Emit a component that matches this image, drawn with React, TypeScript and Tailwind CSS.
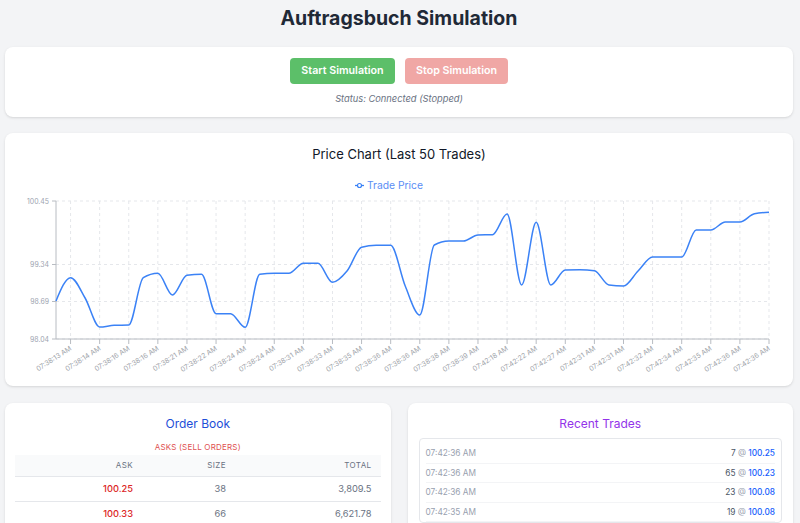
import React from "react";

const X0 = 56;
const X1 = 769;
const YTOP = 201;
const YBOT = 339;

// pixel y of each of the last 50 trades (read off the chart area)
const tradeY = [
  301, 277.7, 298, 327, 325.3, 325, 277.7, 273.3, 295, 275.3,
  274.3, 313.7, 313.7, 327.3, 274.3, 273.3, 273.3, 263.3, 263.3, 282.3,
  271, 247.3, 245.3, 245.3, 286, 315, 245, 241, 241, 235,
  234.7, 214, 285, 222.3, 285, 270, 269.7, 270.7, 285, 286,
  271, 257, 257, 257, 230, 230, 222, 222, 213.7, 212.3,
];

const tickLabels = [
  "07:38:13 AM", "07:38:14 AM", "07:38:16 AM", "07:38:16 AM", "07:38:21 AM",
  "07:38:22 AM", "07:38:24 AM", "07:38:24 AM", "07:38:31 AM", "07:38:33 AM",
  "07:38:35 AM", "07:38:36 AM", "07:38:36 AM", "07:38:38 AM", "07:38:39 AM",
  "07:42:18 AM", "07:42:22 AM", "07:42:27 AM", "07:42:31 AM", "07:42:31 AM",
  "07:42:32 AM", "07:42:34 AM", "07:42:35 AM", "07:42:36 AM", "07:42:36 AM",
];

const yTicks = [
  { label: "100.45", y: 201 },
  { label: "99.34", y: 264.5 },
  { label: "98.69", y: 301.5 },
  { label: "98.04", y: 339 },
];

const asks = [
  { price: "100.25", size: "38", total: "3,809.5" },
  { price: "100.33", size: "66", total: "6,621.78" },
];

const trades = [
  { time: "07:42:36 AM", qty: "7", price: "100.25" },
  { time: "07:42:36 AM", qty: "65", price: "100.23" },
  { time: "07:42:36 AM", qty: "23", price: "100.08" },
  { time: "07:42:35 AM", qty: "19", price: "100.08" },
];

const step = (X1 - X0) / (tradeY.length - 1);

// monotone-x curve, same maths as d3's curveMonotoneX
function monotonePath(ys: number[]) {
  const n = ys.length;
  const sign = (v: number) => (v < 0 ? -1 : v > 0 ? 1 : 0);
  const m: number[] = new Array(n).fill(0);
  for (let i = 1; i < n - 1; i++) {
    const s0 = (ys[i] - ys[i - 1]) / step;
    const s1 = (ys[i + 1] - ys[i]) / step;
    const p = (s0 + s1) / 2;
    m[i] = (sign(s0) + sign(s1)) * Math.min(Math.abs(s0), Math.abs(s1), 0.5 * Math.abs(p)) || 0;
  }
  m[0] = (3 * (ys[1] - ys[0]) / step - m[1]) / 2;
  m[n - 1] = (3 * (ys[n - 1] - ys[n - 2]) / step - m[n - 2]) / 2;
  const dx = step / 3;
  let d = `M${X0},${ys[0]}`;
  for (let i = 0; i < n - 1; i++) {
    const xa = X0 + step * i;
    const xb = xa + step;
    d += `C${xa + dx},${ys[i] + dx * m[i]},${xb - dx},${ys[i + 1] - dx * m[i + 1]},${xb},${ys[i + 1]}`;
  }
  return d;
}

function PriceChart() {
  return (
    <svg width={788} height={215} className="block overflow-visible">
      <g transform="translate(-5,-166)">
        {/* legend */}
        <line x1={355} y1={185.5} x2={364} y2={185.5} stroke="#3b82f6" strokeWidth={1.3} />
        <circle cx={359.5} cy={185.5} r={2} fill="#fff" stroke="#3b82f6" strokeWidth={1.2} />
        <text x={367} y={189} fontSize={10.3} fill="#5b8ef5">Trade Price</text>

        {/* grid */}
        {yTicks.map((t) => (
          <line key={t.label} x1={X0} x2={X1} y1={t.y} y2={t.y} stroke="#e5e7eb" strokeDasharray="3 3" />
        ))}
        {tickLabels.map((_, k) => {
          const x = X0 + step * (1 + 2 * k);
          return <line key={k} x1={x} x2={x} y1={YTOP} y2={YBOT} stroke="#e5e7eb" strokeDasharray="3 3" />;
        })}

        {/* axes */}
        <line x1={X0} x2={X0} y1={YTOP} y2={YBOT} stroke="#b8bcc2" />
        <line x1={X0} x2={X1} y1={YBOT} y2={YBOT} stroke="#b8bcc2" />
        {yTicks.map((t) => (
          <g key={t.label}>
            <line x1={X0 - 4} x2={X0} y1={t.y} y2={t.y} stroke="#b8bcc2" />
            <text x={X0 - 7} y={t.y + 2.6} fontSize={6.9} textAnchor="end" fill="#9ca3af">
              {t.label}
            </text>
          </g>
        ))}
        {tickLabels.map((label, k) => {
          const x = X0 + step * (1 + 2 * k);
          return (
            <g key={k}>
              <line x1={x} x2={x} y1={YBOT} y2={YBOT + 5} stroke="#b8bcc2" />
              <text
                x={x + 1.5}
                y={349.5}
                fontSize={6.9}
                textAnchor="end"
                fill="#a1a5ab"
                transform={`rotate(-33 ${x + 1.5} 349.5)`}
              >
                {label}
              </text>
            </g>
          );
        })}

        <path d={monotonePath(tradeY)} fill="none" stroke="#3b82f6" strokeWidth={1.5} />
      </g>
    </svg>
  );
}

function OrderBook() {
  return (
    <div className="bg-white rounded-lg shadow-sm px-[10px] pt-[13px] h-[140px]">
      <h2 className="text-center text-[12px] leading-[16px] text-[#1d4ed8]">Order Book</h2>
      <div className="mt-[9px] text-center text-[8px] leading-[12px] tracking-wide uppercase text-[#e05050]">
        Asks (Sell Orders)
      </div>
      <table className="mt-[2px] w-full text-[9.3px]">
        <thead>
          <tr className="bg-gray-50 h-[21px] text-[8px] tracking-wider uppercase text-gray-500">
            <th className="w-[127px] pr-[9px] text-right font-normal">Ask</th>
            <th className="w-[93px] pr-[9px] text-right font-normal">Size</th>
            <th className="pr-[9px] text-right font-normal">Total</th>
          </tr>
        </thead>
        <tbody>
          {asks.map((a) => (
            <tr key={a.price} className="h-[25px] border-t border-gray-200">
              <td className="pr-[9px] text-right font-medium text-[#dc2626]">{a.price}</td>
              <td className="pr-[9px] text-right text-gray-500">{a.size}</td>
              <td className="pr-[9px] text-right text-gray-500">{a.total}</td>
            </tr>
          ))}
        </tbody>
      </table>
    </div>
  );
}

function RecentTrades() {
  return (
    <div className="bg-white rounded-lg shadow-sm px-[11px] pt-[13px] h-[140px]">
      <h2 className="text-center text-[12px] leading-[16px] text-[#9333ea]">Recent Trades</h2>
      <div className="mt-[6px] border border-gray-200 rounded px-[6px] pt-[5px]">
        {trades.map((t, i) => (
          <div
            key={i}
            className="h-[19.5px] flex items-center justify-between border-b border-gray-100 text-[8.3px]"
          >
            <span className="text-gray-400">{t.time}</span>
            <span>
              <span className="text-gray-600">{t.qty}</span>
              <span className="text-gray-400"> @ </span>
              <span className="font-medium text-blue-600">{t.price}</span>
            </span>
          </div>
        ))}
      </div>
    </div>
  );
}

export default function App() {
  return (
    <div className="h-[523px] overflow-hidden bg-[#f3f4f6] font-['Inter',sans-serif]">
      <div className="pl-[5px] pr-[7px]">
        <h1 className="h-[47px] pt-[5px] text-center text-[19.5px] leading-[26px] font-bold text-[#1f2937]">
          Auftragsbuch Simulation
        </h1>

        <div className="bg-white rounded-lg shadow-sm h-[70px] flex flex-col items-center pt-[11px]">
          <div className="flex gap-[10px]">
            <button className="w-[105px] h-[26px] rounded-[4px] bg-[#5cbf69] text-white text-[10.7px] font-semibold">
              Start Simulation
            </button>
            <button className="w-[103px] h-[26px] rounded-[4px] bg-[#f0a7a5] text-white text-[10.7px] font-semibold">
              Stop Simulation
            </button>
          </div>
          <p className="mt-[9px] text-[9.3px] leading-[12px] italic text-gray-500">Status: Connected (Stopped)</p>
        </div>

        <div className="mt-[16px] bg-white rounded-lg shadow-sm h-[253px] pt-[12px]">
          <h2 className="mb-[3px] text-center text-[13px] leading-[18px] text-[#111827]">
            Price Chart (Last 50 Trades)
          </h2>
          <PriceChart />
        </div>

        <div className="mt-[17px] grid grid-cols-2 gap-[17px]">
          <OrderBook />
          <RecentTrades />
        </div>
      </div>
    </div>
  );
}
